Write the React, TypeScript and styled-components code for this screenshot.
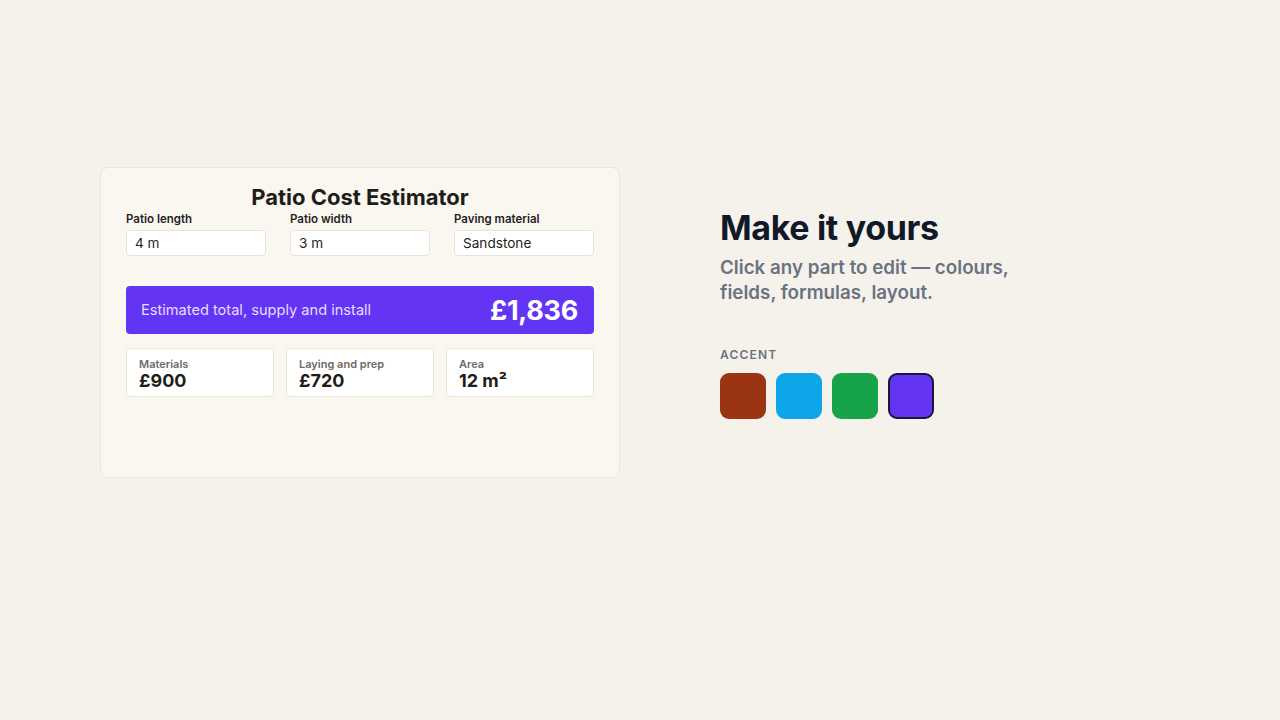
import styled, { createGlobalStyle } from 'styled-components';

const GlobalStyle = createGlobalStyle`
  * {
    box-sizing: border-box;
  }

  body {
    margin: 0;
    background: #f5f2ec;
    font-family: Inter, "Noto Sans", sans-serif;
    color: #1f1d1a;
  }
`;

const Page = styled.main`
  display: flex;
  align-items: flex-start;
  gap: 100px;
  min-height: 720px;
  padding: 167px 0 0 100px;
`;

const Card = styled.section`
  width: 520px;
  height: 311px;
  padding: 14px 25px 0;
  background: #faf7f1;
  border: 1px solid #ebe5da;
  border-radius: 8px;
`;

const Title = styled.h1`
  margin: 0;
  font-size: 22px;
  line-height: 30px;
  font-weight: 700;
  text-align: center;
  color: #1f1d1a;
`;

const Fields = styled.div`
  display: grid;
  grid-template-columns: repeat(3, 1fr);
  column-gap: 24px;
`;

const Field = styled.label`
  display: flex;
  flex-direction: column;
  gap: 3px;
`;

const FieldLabel = styled.span`
  font-size: 11.5px;
  line-height: 15px;
  font-weight: 600;
  color: #26231f;
`;

const Input = styled.div`
  height: 26px;
  padding: 0 8px;
  display: flex;
  align-items: center;
  font-size: 13.6px;
  color: #1f1d1a;
  background: #ffffff;
  border: 1px solid #e7e2d8;
  border-radius: 4px;
`;

const TotalBar = styled.div`
  margin-top: 30px;
  height: 48px;
  padding: 0 16px 0 15px;
  display: flex;
  align-items: center;
  justify-content: space-between;
  background: #6434f5;
  border-radius: 4px;
  color: #ffffff;
`;

const TotalLabel = styled.span`
  font-size: 14.6px;
  color: #e6deff;
`;

const TotalValue = styled.span`
  font-size: 27px;
  font-weight: 700;
  letter-spacing: -0.01em;
`;

const Stats = styled.div`
  margin-top: 14px;
  display: grid;
  grid-template-columns: repeat(3, 1fr);
  gap: 12px;
`;

const Stat = styled.div`
  height: 49px;
  padding: 8px 12px 0;
  background: #ffffff;
  border: 1px solid #ece7de;
  border-radius: 4px;
`;

const StatLabel = styled.div`
  font-size: 11px;
  line-height: 14px;
  font-weight: 600;
  color: #6e6a64;
`;

const StatValue = styled.div`
  font-size: 18px;
  line-height: 20px;
  font-weight: 700;
  color: #1f1d1a;
`;

const Aside = styled.section`
  width: 340px;
  padding-top: 41px;
`;

const Heading = styled.h2`
  margin: 0;
  font-size: 34px;
  line-height: 40px;
  font-weight: 700;
  letter-spacing: -0.01em;
  color: #111827;
`;

const Lead = styled.p`
  margin: 7px 0 0;
  font-size: 18.8px;
  line-height: 25px;
  font-weight: 600;
  color: #6b7280;
`;

const SectionLabel = styled.div`
  margin-top: 42px;
  font-size: 12px;
  line-height: 16px;
  font-weight: 600;
  letter-spacing: 0.1em;
  color: #6b7280;
`;

const Swatches = styled.div`
  margin-top: 10px;
  display: flex;
  gap: 10px;
`;

const Swatch = styled.button<{ $color: string; $active?: boolean }>`
  width: 46px;
  height: 46px;
  padding: 0;
  border-radius: 9px;
  background: ${({ $color }) => $color};
  border: ${({ $active }) => ($active ? '2px solid #1a1633' : 'none')};
  cursor: pointer;
`;

const fields = [
  { label: 'Patio length', value: '4 m' },
  { label: 'Patio width', value: '3 m' },
  { label: 'Paving material', value: 'Sandstone' },
];

const stats = [
  { label: 'Materials', value: '£900' },
  { label: 'Laying and prep', value: '£720' },
  { label: 'Area', value: '12 m²' },
];

const accents = ['#9a3412', '#0ea5e9', '#16a34a', '#6434f5'];

export default function App() {
  return (
    <>
      <GlobalStyle />
      <Page>
        <Card>
          <Title>Patio Cost Estimator</Title>
          <Fields>
            {fields.map(({ label, value }) => (
              <Field key={label}>
                <FieldLabel>{label}</FieldLabel>
                <Input>{value}</Input>
              </Field>
            ))}
          </Fields>
          <TotalBar>
            <TotalLabel>Estimated total, supply and install</TotalLabel>
            <TotalValue>£1,836</TotalValue>
          </TotalBar>
          <Stats>
            {stats.map(({ label, value }) => (
              <Stat key={label}>
                <StatLabel>{label}</StatLabel>
                <StatValue>{value}</StatValue>
              </Stat>
            ))}
          </Stats>
        </Card>
        <Aside>
          <Heading>Make it yours</Heading>
          <Lead>
            Click any part to edit — colours,
            <br />
            fields, formulas, layout.
          </Lead>
          <SectionLabel>ACCENT</SectionLabel>
          <Swatches>
            {accents.map((color, i) => (
              <Swatch
                key={color}
                $color={color}
                $active={i === accents.length - 1}
                aria-label={`Accent ${color}`}
              />
            ))}
          </Swatches>
        </Aside>
      </Page>
    </>
  );
}
